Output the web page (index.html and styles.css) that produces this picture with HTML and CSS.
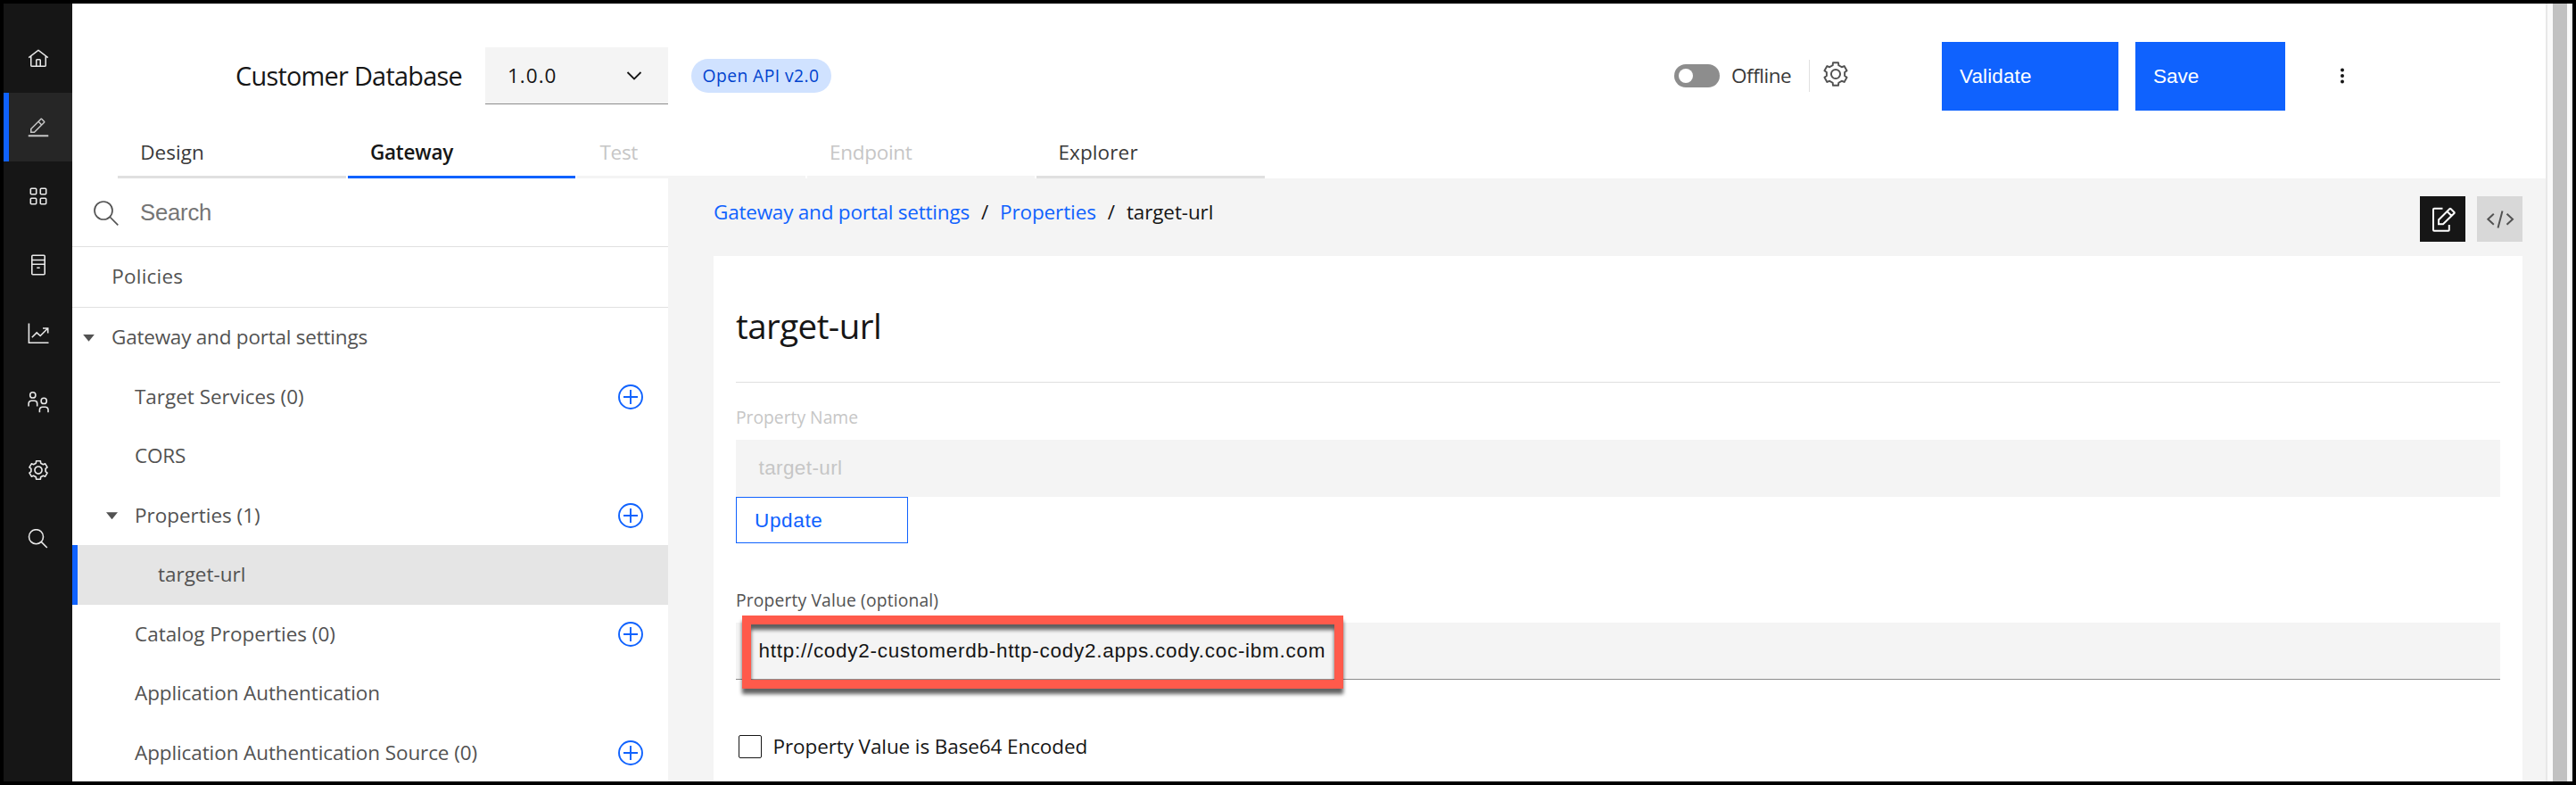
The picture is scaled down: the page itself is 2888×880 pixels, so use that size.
FILE: index.html
```
<!DOCTYPE html>
<html lang="en">
<head>
<meta charset="utf-8">
<title>Customer Database</title>
<link rel="stylesheet" href="styles.css">
</head>
<body>
<svg class="defs" aria-hidden="true">
  <symbol id="gear" viewBox="-16 -16 32 32">
    <path d="M-3.15-13.64L3.15-13.64L3.58-10.4L7.22-8.3L10.24-9.55L13.39-4.09L10.8-2.1L10.8 2.1L13.39 4.09L10.24 9.55L7.22 8.3L3.58 10.4L3.15 13.64L-3.15 13.64L-3.58 10.4L-7.22 8.3L-10.24 9.55L-13.39 4.09L-10.8 2.1L-10.8-2.1L-13.39-4.09L-10.24-9.55L-7.22-8.3L-3.58-10.4Z"/>
    <circle r="5.4"/>
  </symbol>
  <symbol id="plus" viewBox="0 0 28 28">
    <circle cx="14" cy="14" r="13"/><path d="M14 6v16M6 14h16"/>
  </symbol>
</svg>
<div class="app">
  <nav class="rail">
    <a class="rail-item"><svg class="ico" viewBox="0 0 32 32"><path class="solid" d="M16.6123,2.2138a1.01,1.01,0,0,0-1.2427,0L1,13.4194l1.2427,1.5717L4,13.6208V26a2.0041,2.0041,0,0,0,2,2H26a2.0037,2.0037,0,0,0,2-2V13.63L29.7573,15,31,13.4282ZM18,26H14V18h4Zm2,0V18a2.0023,2.0023,0,0,0-2-2H14a2.002,2.002,0,0,0-2,2v8H6V12.0615l10-7.79,10,7.8005V26Z"/></svg></a>
    <a class="rail-item active"><svg class="ico" viewBox="0 0 32 32"><path class="solid" d="M1 27H31V29.6H1zM25.4 9c.8-.8.8-2 0-2.8l-3.6-3.6c-.8-.8-2-.8-2.8 0l-15 15V24h6.4L25.4 9zM20.4 4L24 7.6l-3 3L17.4 7 20.4 4zM6 22v-3.6l10-10 3.6 3.6-10 10H6z"/></svg></a>
    <a class="rail-item"><svg class="ico" viewBox="0 0 24 24"><rect x="3.3" y="3.3" width="6.4" height="6.4" rx="1"/><rect x="14.3" y="3.3" width="6.4" height="6.4" rx="1"/><rect x="3.3" y="14.3" width="6.4" height="6.4" rx="1"/><rect x="14.3" y="14.3" width="6.4" height="6.4" rx="1"/></svg></a>
    <a class="rail-item"><svg class="ico" viewBox="0 0 24 24"><rect x="4.8" y="1.3" width="14.4" height="21.4" rx="1"/><path d="M5 6.5h14M5 11.2h14M10.3 15.2h3.4"/></svg></a>
    <a class="rail-item"><svg class="ico" viewBox="0 0 24 24"><path d="M1.4 .5V22.3H23.5M4.8 16.2L10.2 10.9L14.2 14.5L22.4 6.3M17 6h5.7v5.5"/></svg></a>
    <a class="rail-item"><svg class="ico" viewBox="0 0 24 24"><circle cx="5.8" cy="3.9" r="3.1"/><path d="M1.1 16.4v-3a3.2 3.2 0 0 1 3.2-3.2h3.2a3.2 3.2 0 0 1 3.2 3.2v3"/><circle cx="18.2" cy="10.4" r="3.1"/><path d="M13.4 23.2v-2.8a3.2 3.2 0 0 1 3.2-3.2h3.2a3.2 3.2 0 0 1 3.2 3.2v2.8"/></svg></a>
    <a class="rail-item"><svg class="ico gear"><use href="#gear"/></svg></a>
    <a class="rail-item"><svg class="ico" viewBox="0 0 24 24"><circle cx="9.5" cy="8.7" r="8"/><path d="M15.2 14.4L21.8 21"/></svg></a>
  </nav>

  <div class="page">
    <header class="header">
      <div class="title-row">
        <h1 class="title">Customer Database</h1>
        <div class="select"><span>1.0.0</span><svg class="chevron" viewBox="0 0 18 12"><path d="M1.5 2L9 9.5L16.5 2"/></svg></div>
        <span class="tag">Open API v2.0</span>
        <div class="actions">
          <span class="toggle"><span class="knob"></span></span>
          <span class="offline">Offline</span>
          <svg class="header-gear"><use href="#gear"/></svg>
          <button class="btn validate">Validate</button>
          <button class="btn save">Save</button>
          <svg class="kebab" viewBox="0 0 6 20"><circle cx="3" cy="3.5" r="2"/><circle cx="3" cy="10" r="2"/><circle cx="3" cy="16.5" r="2"/></svg>
        </div>
      </div>
      <div class="tabs">
        <a class="tab">Design</a>
        <a class="tab selected">Gateway</a>
        <a class="tab disabled">Test</a>
        <a class="tab disabled">Endpoint</a>
        <a class="tab explorer">Explorer</a>
      </div>
    </header>

    <div class="body">
      <aside class="sidebar">
        <div class="search"><svg class="search-ico" viewBox="0 0 28 28"><circle cx="11" cy="11" r="10"/><path d="M18 18L27.3 27.3"/></svg><span class="search-text">Search</span></div>
        <div class="row policies"><span class="label">Policies</span></div>
        <div class="row l0"><i class="caret"></i><span class="label settings">Gateway and portal settings</span></div>
        <div class="row l1"><span class="label">Target Services (0)</span><svg class="add"><use href="#plus"/></svg></div>
        <div class="row l1"><span class="label cors">CORS</span></div>
        <div class="row l1"><i class="caret"></i><span class="label">Properties (1)</span><svg class="add"><use href="#plus"/></svg></div>
        <div class="row l2 current"><span class="label">target-url</span></div>
        <div class="row l1"><span class="label">Catalog Properties (0)</span><svg class="add"><use href="#plus"/></svg></div>
        <div class="row l1"><span class="label auth">Application Authentication</span></div>
        <div class="row l1"><span class="label auth">Application Authentication Source (0)</span><svg class="add"><use href="#plus"/></svg></div>
      </aside>

      <main class="main">
        <div class="bar">
          <div class="crumbs"><a class="crumb-first">Gateway and portal settings</a><span class="sep">/</span><a>Properties</a><span class="sep">/</span><span>target-url</span></div>
          <div class="modes">
            <span class="mode dark"><svg class="mode-edit" viewBox="0 0 28 28"><path d="M13.5 1.7H4a1 1 0 0 0-1 1V25.8a1 1 0 0 0 1 1H19.8a1 1 0 0 0 1-1V20M9 19.3V14.5L21.5 2Q22 1.5 22.5 2L26.5 6Q27 6.5 26.5 7L14 19.3ZM18.5 5L23.5 10"/></svg></span>
            <span class="mode"><svg class="mode-code" viewBox="0 0 32 32"><path d="M8.8 9.8L2.3 15.8L8.8 21.8M18.5 6.5L13.5 25.5M23.5 9.8L30 15.8L23.5 21.8"/></svg></span>
          </div>
        </div>
        <section class="card">
          <h2 class="heading">target-url</h2>
          <div class="field-label off">Property Name</div>
          <div class="input off">target-url</div>
          <button class="update">Update</button>
          <div class="field-label value-label">Property Value (optional)</div>
          <div class="input value">http://cody2-customerdb-http-cody2.apps.cody.coc-ibm.com<span class="highlight"></span></div>
          <div class="check"><span class="box"></span><span class="check-text">Property Value is Base64 Encoded</span></div>
        </section>
      </main>
    </div>
  </div>

  <div class="scroll"><span class="thumb"></span></div>
</div>
</body>
</html>
```
FILE: styles.css
```
* { box-sizing: border-box; }
body {
  margin: 0;
  width: 2888px;
  height: 880px;
  overflow: hidden;
  background: #fff;
  font: 400 22.5px "Open Sans", "Noto Sans", sans-serif;
  color: #161616;
}
h1, h2 { margin: 0; font-weight: 400; }
svg { flex: none; fill: none; stroke: currentColor; }
button, .input, .search-text { font-family: "Liberation Sans", Arial, sans-serif; }
.defs { display: none; }
.app { display: flex; height: 880px; border: 4px solid #000; overflow: hidden; }

/* Left icon rail */
.rail { width: 77px; flex: none; padding-top: 23px; background: #161616; color: #e8e8e8; }
.rail-item { display: flex; height: 77px; align-items: center; justify-content: center; }
.rail-item.active { background: #262626; box-shadow: inset 6px 0 #0f62fe; color: #c6c6c6; }
.ico { width: 24px; height: 24px; stroke-width: 1.6; }
.ico.gear { margin-bottom: 1px; stroke-width: 2.2; stroke-linejoin: round; }
.solid { fill: currentColor; stroke: none; }

/* Header */
.page { width: 2773px; flex: none; }
.header { height: 196px; background: #fff; }
.title-row { display: flex; align-items: center; height: 146px; padding: 16px 0 0 183px; }
.title { width: 280px; flex: none; padding-bottom: 2px; font-size: 28.9px; letter-spacing: -.75px; white-space: nowrap; }
.select {
  display: flex; align-items: center; justify-content: space-between;
  width: 205px; height: 64px; padding: 0 29px 0 25px;
  background: #f4f4f4; border-bottom: 1px solid #8d8d8d; letter-spacing: 1px;
}
.chevron { width: 18px; height: 12px; stroke-width: 1.8; }
.tag {
  width: 157px; height: 38px; margin-left: 26px; padding-left: 12.5px; border-radius: 19px;
  background: #d0e2ff; color: #0043ce; font-size: 19.3px; line-height: 38px; letter-spacing: .43px;
}
.actions { display: flex; align-items: center; margin-left: auto; padding-right: 225px; }
.toggle { width: 51px; height: 26px; padding: 5px; border-radius: 13px; background: #8d8d8d; }
.knob { display: block; width: 16px; height: 16px; border-radius: 50%; background: #fff; }
.offline {
  width: 101px; height: 36px; margin-right: 14px; padding-left: 13px;
  border-right: 1px solid #e0e0e0; color: #393939; line-height: 36px; letter-spacing: -.45px;
}
.header-gear { width: 30px; height: 30px; margin: 0 104px 4px 0; color: #525252; stroke-width: 2.1; stroke-linejoin: round; }
.btn { height: 77px; padding: 2px 0 0 20px; border: 0; background: #0f62fe; color: #fff; font-size: 22.5px; text-align: left; }
.validate { width: 198px; letter-spacing: .12px; }
.save { width: 168px; margin-left: 19px; }
.kebab { width: 6px; height: 20px; margin-left: 61px; fill: #161616; stroke: none; }

.tabs { display: flex; gap: 2px; height: 50px; padding-left: 51px; }
.tab { width: 255.6px; height: 50px; padding-left: 25.3px; border-bottom: 3px solid #e0e0e0; color: #393939; line-height: 41px; }
.tab.selected { border-color: #0f62fe; color: #161616; font-weight: 600; letter-spacing: -.2px; }
.tab.disabled { border-color: #f4f4f4; color: #c6c6c6; letter-spacing: -.3px; }
.tab.explorer { padding-left: 24px; letter-spacing: .13px; }

/* Navigation tree */
.body { display: flex; height: 676px; }
.sidebar { width: 668px; flex: none; color: #525252; background: #fff; }
.search { display: flex; align-items: center; height: 77px; padding-left: 24px; border-bottom: 1px solid #e0e0e0; }
.search-ico { width: 28px; height: 28px; margin-top: 2px; stroke-width: 1.7; }
.search-text { margin-left: 24px; color: #757575; font-size: 25.7px; letter-spacing: -.22px; }
.row { display: flex; align-items: center; height: 66.5px; padding-right: 28px; }
.label { padding-bottom: .6px; letter-spacing: -.02px; white-space: nowrap; }
.policies { height: 68px; padding-left: 44.3px; border-bottom: 1px solid #e0e0e0; }
.policies .label { padding-bottom: 1.5px; letter-spacing: .21px; }
.l0 { padding-left: 44px; }
.l1 { padding-left: 70px; }
.l2 { padding-left: 96px; }
.settings { padding-bottom: 1.5px; letter-spacing: -.22px; }
.cors { letter-spacing: -.19px; }
.auth { letter-spacing: -.1px; }
.current { background: #e5e5e5; box-shadow: inset 6px 0 #0f62fe; }
.caret {
  width: 13px; height: 8px; margin: 1px 19px 0 -32px;
  background: #525252; clip-path: polygon(0 0, 100% 0, 50% 100%);
}
.add { width: 28px; height: 28px; margin-left: auto; color: #0f62fe; stroke-width: 1.9; }

/* Property editor */
.main { width: 2105px; padding: 0 26px 0 51px; background: #f4f4f4; }
.bar { display: flex; justify-content: space-between; height: 87px; padding-top: 20px; }
.crumbs { display: flex; height: 36px; line-height: 36px; letter-spacing: -.12px; }
.crumbs a { color: #0f62fe; }
.crumbs .crumb-first { letter-spacing: -.22px; }
.sep { margin: 0 13px; }
.modes { display: flex; gap: 13px; }
.mode { display: flex; align-items: center; justify-content: center; width: 51px; height: 51px; background: #d8d8d8; color: #525252; }
.mode.dark { background: #161616; color: #fff; }
.mode-edit { width: 28px; height: 28px; stroke-width: 2; }
.mode-code { width: 32px; height: 32px; stroke-width: 2; }

.card { height: 600px; padding: 40px 25px 0; background: #fff; }
.heading { height: 102px; border-bottom: 1px solid #e0e0e0; font-size: 38.5px; line-height: 77px; letter-spacing: -.54px; }
.field-label { height: 26px; margin: 25px 0 13px; color: #525252; font-size: 19.3px; line-height: 28px; letter-spacing: .15px; }
.field-label.off { letter-spacing: 0; color: #c6c6c6; }
.input { position: relative; height: 64px; padding-left: 25.5px; background: #f4f4f4; line-height: 63px; }
.input.off { color: #c6c6c6; letter-spacing: .39px; }
.input.value { border-bottom: 1px solid #8d8d8d; letter-spacing: .73px; }
.update {
  display: block; width: 193px; height: 52px; padding: 2px 0 0 20px; border: 1px solid #0f62fe;
  background: #fff; color: #0f62fe; font-size: 22.5px; letter-spacing: .65px; text-align: left;
}
.value-label { margin-top: 50px; }
.highlight {
  position: absolute; left: 7px; top: -8px; width: 674px; height: 82px;
  border: 10px solid #ff5a4b; filter: drop-shadow(0 6px 2px rgba(0, 0, 0, .62));
}
.check { display: flex; align-items: center; height: 26px; margin-top: 62px; padding-left: 3px; }
.box { width: 26px; height: 26px; margin-right: 12.5px; border: 1.5px solid #161616; border-radius: 2px; }
.check-text { padding-bottom: 1px; letter-spacing: -.1px; }

/* Scrollbar */
.scroll {
  width: 30px; flex: none; padding-left: 6px; background: #fafafa;
  border-left: 2px solid #e8e8e8; border-right: 2px solid #e8e8e8;
}
.thumb { display: block; width: 16px; height: 100%; background: #c1c1c1; }
```
